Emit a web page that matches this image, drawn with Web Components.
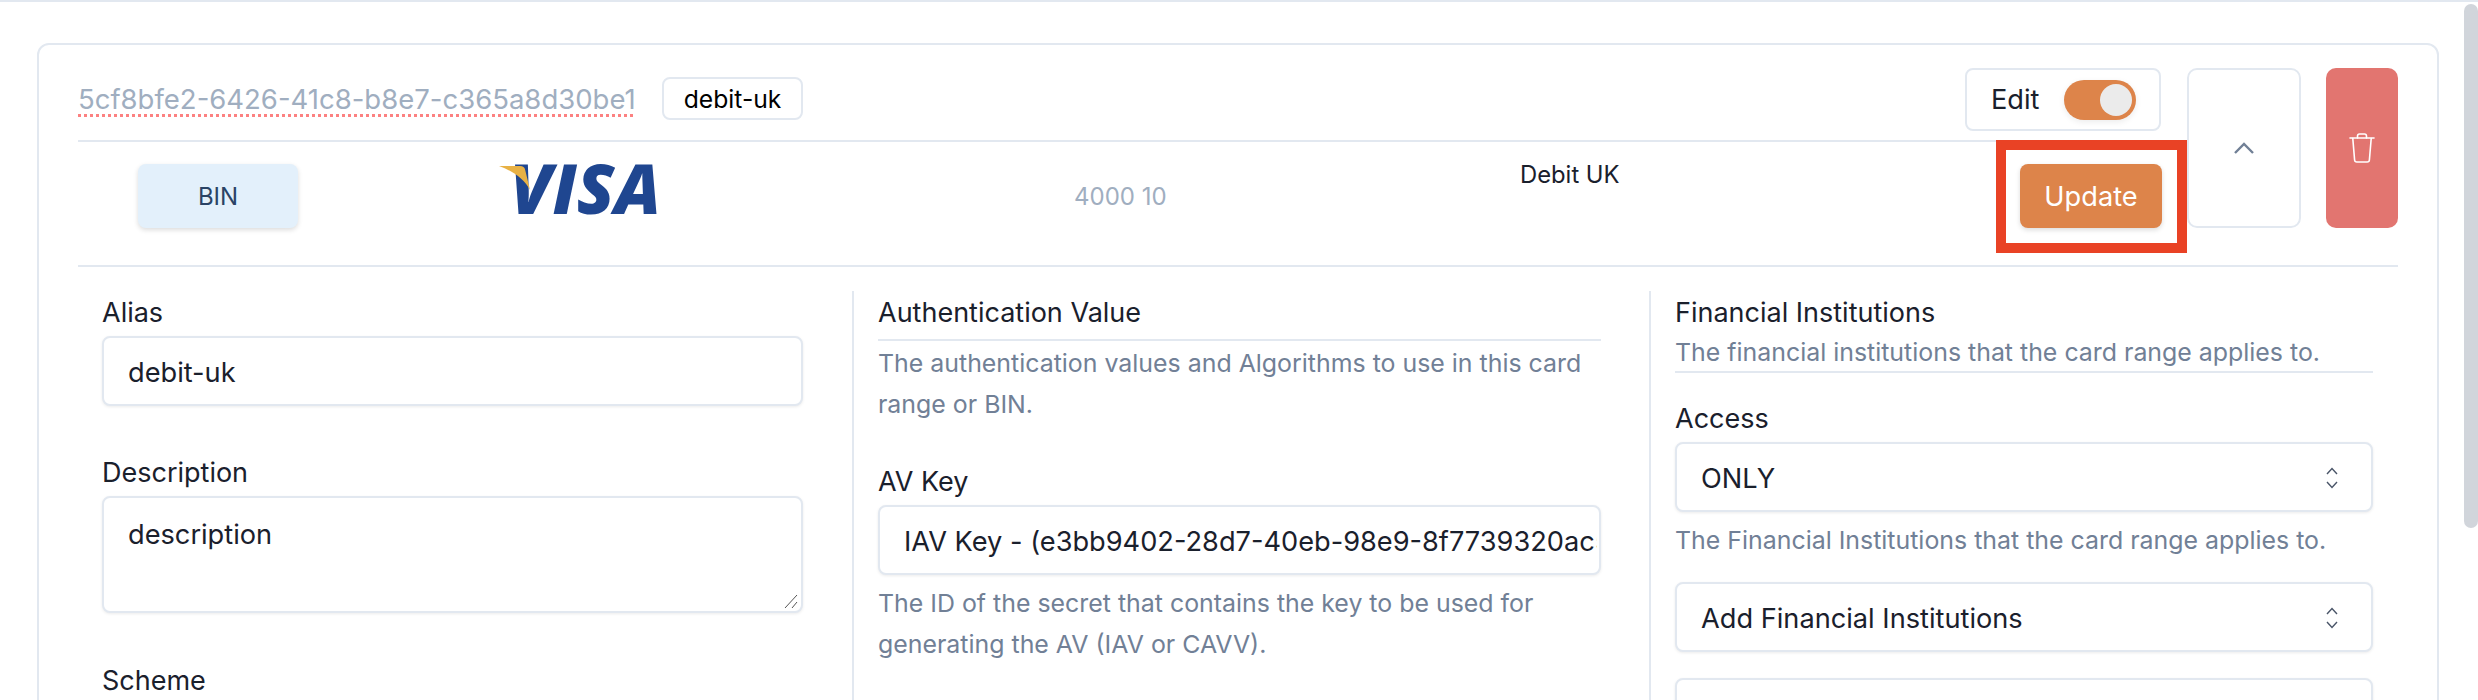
<!DOCTYPE html>
<html>
<head>
<meta charset="utf-8">
<title>Card range</title>
<style>
  html, body { margin: 0; height: 700px; overflow: hidden; background: #fff; }
  body { font-family: Inter, "Liberation Sans", sans-serif; font-size: 27.2px; color: #1a202c; }
</style>
</head>
<body>
<range-page>
  <range-card>
    <span slot="id">5cf8bfe2-6426-41c8-b8e7-c365a8d30be1</span>
    <span slot="alias">debit-uk</span>
    <span slot="kind">BIN</span>
    <span slot="number">4000 10</span>
    <span slot="name">Debit UK</span>

    <form-column slot="left">
      <form-field label="Alias" value="debit-uk" gap="50"></form-field>
      <form-field label="Description" value="description" area gap="51"></form-field>
      <form-field label="Scheme"></form-field>
    </form-column>

    <form-column slot="middle">
      <section-head label="Authentication Value" help="The authentication values and Algorithms to use in this card range or BIN." lined-label></section-head>
      <form-field label="AV Key" value="IAV Key - (e3bb9402-28d7-40eb-98e9-8f7739320ac5)" help="The ID of the secret that contains the key to be used for generating the AV (IAV or CAVV)." clip></form-field>
    </form-column>

    <form-column slot="right">
      <section-head label="Financial Institutions" help="The financial institutions that the card range applies to." lined-help></section-head>
      <form-field label="Access" value="ONLY" help="The Financial Institutions that the card range applies to." select gap="23"></form-field>
      <form-field value="Add Financial Institutions" select gap="26"></form-field>
      <form-field select></form-field>
    </form-column>
  </range-card>
</range-page>

<script>
const fieldBase = `
  :host { display: block; }
  .label { font-size: 27px; line-height: 30px; padding-top: 2px; margin-bottom: -2px; color: #1a202c; }
  .help { font-size: 24.9px; line-height: 41px; padding-top: 2px; margin-bottom: -2px; color: #718096; }
`;

class RangePage extends HTMLElement {
  constructor() {
    super();
    this.attachShadow({ mode: 'open' });
    this.shadowRoot.innerHTML = `
      <style>
        :host { display: block; height: 700px; box-sizing: border-box; position: relative; overflow: hidden;
                border-top: 2px solid #e2e8f0; padding: 41px 39px 0 37px; }
        .thumb { position: absolute; top: 2px; right: 0; width: 14px; height: 524px; background: #d1d5db; border-radius: 7px; }
      </style>
      <slot></slot>
      <div class="thumb"></div>
    `;
  }
}

class RangeCard extends HTMLElement {
  constructor() {
    super();
    this.attachShadow({ mode: 'open' });
    this.shadowRoot.innerHTML = `
      <style>
        :host { display: block; box-sizing: border-box; height: 800px; border: 2px solid #e2e8f0; border-radius: 12px;
                padding: 23px 39px 0 39px; }
        .top { display: flex; align-items: flex-start; height: 197px; }
        .summary { flex: 1; min-width: 0; position: relative; }
        .head { display: flex; align-items: center; height: 74px; padding-bottom: 11px; box-sizing: border-box; border-bottom: 2px solid #e2e8f0; }
        .id { color: #a0aec0; font-size: 27.5px; line-height: 30px;
              text-decoration: underline dotted #fc8181 3px; text-underline-offset: 5px; }
        .chip { margin-left: 26px; box-sizing: border-box; height: 43px; padding: 0 20px; display: flex; align-items: center;
                border: 2px solid #e2e8f0; border-radius: 8px; font-size: 24.7px; color: #000; }
        .edit { margin-left: auto; margin-right: 26px; box-sizing: border-box; height: 63px; width: 196px; align-self: flex-start;
                display: flex; align-items: center; padding-left: 24px; gap: 25px;
                border: 2px solid #e2e8f0; border-radius: 8px; font-size: 27.2px; color: #1a202c; }
        .details { position: relative; display: grid; grid-template-columns: 60px 160px 201px 162px 1fr; height: 87px; padding-top: 22px; box-sizing: border-box; }
        .kind { grid-column: 2; box-sizing: border-box; height: 64px; display: flex; align-items: center; justify-content: center;
                background: #e3f0fb; color: #2a4365; font-size: 24px; border-radius: 8px; box-shadow: 0 2px 5px rgba(0,0,0,.14); }
        .logo { grid-column: 4; margin-top: 1px; }
        .number { position: absolute; left: 996px; top: 40px; font-size: 24px; line-height: 30px; color: #a0aec0; }
        .name { position: absolute; left: 1442px; top: 18px; font-size: 23.8px; line-height: 30px; color: #1a202c; }
        .update { position: absolute; right: 25px; top: 22px; width: 142px; height: 64px; border-radius: 8px; background: #dd844a; color: #fff;
                  font-size: 27.2px; display: flex; align-items: center; justify-content: center; box-shadow: 0 2px 5px rgba(0,0,0,.14); }
        .mark { position: absolute; right: 0; top: -2px; width: 191px; height: 113px; box-sizing: border-box; border: 10px solid #e94225; pointer-events: none; }
        .toggler { box-sizing: border-box; width: 114px; height: 160px; border: 2px solid #e2e8f0; border-radius: 10px;
                   display: flex; align-items: center; justify-content: center; }
        .delete { margin-left: 25px; width: 72px; height: 160px; border-radius: 10px; background: #e27570;
                  display: flex; align-items: center; justify-content: center; }
        svg { display: block; }
        .rule { border-top: 2px solid #e2e8f0; }
        .cols { display: grid; grid-template-columns: 774px 797px 1fr; margin-top: 24px; }
        .col { box-sizing: border-box; height: 500px; padding-top: 5px; }
        .col.a { padding-left: 24px; }
        .col.a ::slotted(*) { margin-right: 49px; }
        .col.b { border-left: 2px solid #e2e8f0; padding-left: 24px; padding-right: 48px; }
        .col.c { border-left: 2px solid #e2e8f0; padding-left: 24px; padding-right: 25px; }
      </style>
      <div class="top">
        <div class="summary">
          <div class="head">
            <span class="id"><slot name="id"></slot></span>
            <span class="chip"><slot name="alias"></slot></span>
            <span class="edit">Edit <toggle-switch></toggle-switch></span>
          </div>
          <div class="details">
            <div class="kind"><slot name="kind"></slot></div>
            <div class="logo"><visa-logo></visa-logo></div>
            <span class="number"><slot name="number"></slot></span>
            <span class="name"><slot name="name"></slot></span>
            <div class="update">Update</div>
            <div class="mark"></div>
          </div>
        </div>
        <div class="toggler">
          <svg width="24" height="14" viewBox="0 0 24 14" fill="none" stroke="#718096" stroke-width="2.4"><path d="M3 12 12 3l9 9"/></svg>
        </div>
        <div class="delete">
          <svg width="28" height="32" viewBox="0 0 28 32" fill="none" stroke="#fff" stroke-width="1.6" stroke-linejoin="round" stroke-linecap="round">
            <path d="M2 6h24"/><path d="M9.5 6V4.2C9.5 3 10.3 2 11.5 2h5c1.200 0 2 1 2 2.200V6"/>
            <path d="M4.800 6.500 6.600 28c.1 1.200 1 2 2.200 2h10.400c1.200 0 2.100-.8 2.200-2l1.800-21.500"/>
          </svg>
        </div>
      </div>
      <div class="rule"></div>
      <div class="cols">
        <div class="col a"><slot name="left"></slot></div>
        <div class="col b"><slot name="middle"></slot></div>
        <div class="col c"><slot name="right"></slot></div>
      </div>
    `;
  }
}

class ToggleSwitch extends HTMLElement {
  constructor() {
    super();
    this.attachShadow({ mode: 'open' });
    this.shadowRoot.innerHTML = `
      <style>
        :host { display: flex; align-items: center; justify-content: flex-end; box-sizing: border-box; width: 72px; height: 40px;
                padding: 4px; border-radius: 20px; background: #dd844a; box-shadow: 0 2px 6px rgba(0,0,0,.08); }
        .knob { width: 32px; height: 32px; border-radius: 50%; background: #ebebeb; }
      </style>
      <div class="knob"></div>
    `;
  }
}

class VisaLogo extends HTMLElement {
  constructor() {
    super();
    this.attachShadow({ mode: 'open' });
    this.shadowRoot.innerHTML = `
      <style>
        :host { display: block; width: 162px; height: 52px; }
        svg { display: block; overflow: visible; }
        text { font-family: "Open Sans", "Liberation Sans", sans-serif; font-weight: 800; font-style: italic; font-size: 69px; fill: #1f4690; }
      </style>
      <svg width="162" height="70" viewBox="0 0 162 70">
        <text x="11" y="49" textLength="151" lengthAdjust="spacingAndGlyphs">VISA</text>
        <path d="M0 1H21c3 0 4.500 1 5.200 4L31 25C25 14 14 6 0 1Z" fill="#e8b144"/>
      </svg>
    `;
  }
}

class FormColumn extends HTMLElement {
  constructor() {
    super();
    this.attachShadow({ mode: 'open' });
    this.shadowRoot.innerHTML = `<style>:host { display: block; }</style><slot></slot>`;
  }
}

class SectionHead extends HTMLElement {
  constructor() {
    super();
    this.attachShadow({ mode: 'open' });
    const lineLabel = this.hasAttribute('lined-label');
    const lineHelp = this.hasAttribute('lined-help');
    this.shadowRoot.innerHTML = `
      <style>
        ${fieldBase}
        :host { margin-bottom: ${lineLabel ? 42 : 29}px; }
        .label { ${lineLabel ? 'padding-bottom: 11px; margin-bottom: 0; border-bottom: 2px solid #e2e8f0;' : ''} }
        .help { ${lineHelp ? 'line-height: 30px; padding: 11px 0 4px; margin-bottom: 0; border-bottom: 2px solid #e2e8f0;' : ''} }
      </style>
      <div class="label">${this.getAttribute('label')}</div>
      <div class="help">${this.getAttribute('help')}</div>
    `;
  }
}

class FormField extends HTMLElement {
  constructor() {
    super();
    this.attachShadow({ mode: 'open' });
    const label = this.getAttribute('label');
    const value = this.getAttribute('value') || '';
    const help = this.getAttribute('help');
    const area = this.hasAttribute('area');
    const select = this.hasAttribute('select');
    const clip = this.hasAttribute('clip');
    const gap = this.getAttribute('gap') || 6;
    this.shadowRoot.innerHTML = `
      <style>
        ${fieldBase}
        :host { margin-bottom: ${gap}px; }
        .label { margin-bottom: 8px; }
        .box { position: relative; box-sizing: border-box; height: ${area ? 117 : 70}px; display: flex; ${area ? 'padding-top: 22px; align-items: flex-start;' : 'padding-top: 3px; align-items: center;'}
               padding-left: 24px; border: 2px solid #e2e8f0; border-radius: 8px; background: #fff;
               box-shadow: 0 1px 3px rgba(0,0,0,.08); font-size: 27.2px; line-height: 30px; color: #1a202c; }
        .value { white-space: nowrap; ${clip ? 'overflow: hidden; margin-right: 2px;' : ''} }
        .icon { position: absolute; right: 32px; top: 22px; }
        .grip { position: absolute; right: 3px; bottom: 2px; }
        .help { margin-top: 6px; }
      </style>
      ${label ? `<div class="label">${label}</div>` : ''}
      ${label === 'Scheme' ? '' : `<div class="box">
        <span class="value">${value}</span>
        ${select ? `<svg class="icon" width="14" height="24" viewBox="0 0 14 24" fill="none" stroke="#4a5568" stroke-width="1.4"><path d="M2 8 7 2.500 12 8M2 16l5 5.500L12 16"/></svg>` : ''}
        ${area ? `<svg class="grip" width="14" height="15" viewBox="0 0 14 15" fill="none" stroke="#555" stroke-width="1"><path d="M1 14 13 1M8 14l5-6"/></svg>` : ''}
      </div>`}
      ${help ? `<div class="help">${help}</div>` : ''}
    `;
  }
}

customElements.define('toggle-switch', ToggleSwitch);
customElements.define('visa-logo', VisaLogo);
customElements.define('section-head', SectionHead);
customElements.define('form-field', FormField);
customElements.define('form-column', FormColumn);
customElements.define('range-card', RangeCard);
customElements.define('range-page', RangePage);
</script>
</body>
</html>
